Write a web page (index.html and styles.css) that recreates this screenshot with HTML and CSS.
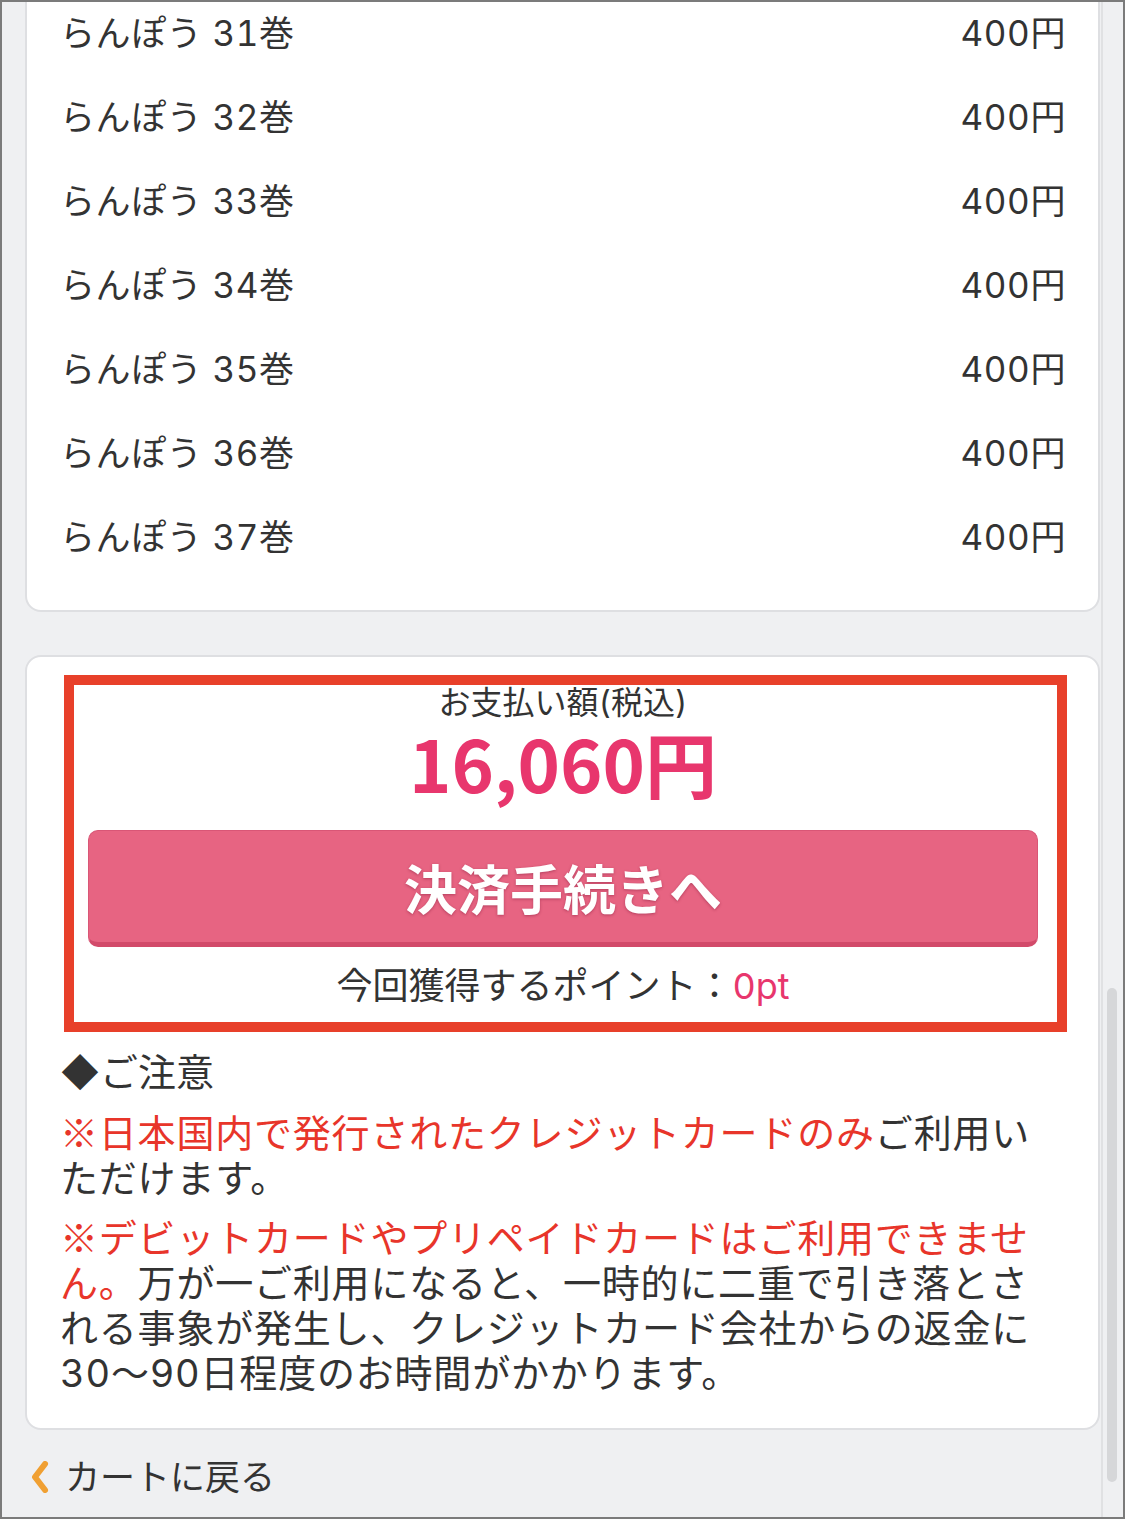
FILE: index.html
```html
<!DOCTYPE html>
<html lang="ja">
<head>
<meta charset="utf-8">
<title>お支払い</title>
<link rel="stylesheet" href="styles.css">
</head>
<body>
<div class="frame">
  <div class="page">
    <div class="card card-list">
      <div class="row"><span>らんぽう 31巻</span><span>400円</span></div>
      <div class="row"><span>らんぽう 32巻</span><span>400円</span></div>
      <div class="row"><span>らんぽう 33巻</span><span>400円</span></div>
      <div class="row"><span>らんぽう 34巻</span><span>400円</span></div>
      <div class="row"><span>らんぽう 35巻</span><span>400円</span></div>
      <div class="row"><span>らんぽう 36巻</span><span>400円</span></div>
      <div class="row"><span>らんぽう 37巻</span><span>400円</span></div>
    </div>

    <div class="card card-pay">
      <div class="pay-label">お支払い額(税込)</div>
      <div class="pay-amount">16,060円</div>
      <div class="pay-button">決済手続きへ</div>
      <div class="points">今回獲得するポイント：<span class="pink">0pt</span></div>
      <div class="highlight"></div>

      <div class="notice-title">◆ご注意</div>
      <p class="note"><span class="red cjk">※</span><span class="red">日本国内で発行されたクレジットカードのみ</span>ご利用いただけます。</p>
      <p class="note"><span class="red cjk">※</span><span class="red">デビットカードやプリペイドカードはご利用できません。</span>万が一ご利用になると、一時的に二重で引き落とされる事象が発生し、クレジットカード会社からの返金に30〜90日程度のお時間がかかります。</p>
    </div>

    <div class="back">
      <svg class="chev" width="20" height="32" viewBox="0 0 20 32"><polyline points="15,3 5,16 15,29" fill="none" stroke="#f0a033" stroke-width="6" stroke-linecap="round" stroke-linejoin="round"/></svg>
      <span>カートに戻る</span>
    </div>
  </div>

  <div class="scroll-track"><div class="scroll-thumb"></div></div>
</div>
</body>
</html>
```

FILE: styles.css
```css
html, body {
  margin: 0;
  padding: 0;
}
body {
  font-family: Inter, "Noto Sans CJK JP", sans-serif;
  font-variant-numeric: tabular-nums;
  color: #333;
}
.cjk {
  font-family: "Noto Sans CJK JP", sans-serif;
  line-height: 0;
}
.frame {
  width: 1125px;
  height: 1519px;
  box-sizing: border-box;
  border: 2px solid #7b7b7b;
  background: #eff0f2;
  position: relative;
  overflow: hidden;
}
.page {
  padding: 0 23px;
}
.card {
  background: #fff;
  border: 2px solid #dedfe2;
  border-radius: 16px;
  position: relative;
}
.card-list {
  margin-top: -43px;
  padding: 30px 32px 31px 33px;
}
.row {
  height: 84px;
  display: flex;
  align-items: center;
  justify-content: space-between;
  font-size: 35px;
  line-height: 1;
  letter-spacing: 0.6px;
}
.card-pay {
  margin-top: 43px;
  padding: 25px 32px 32px 33px;
}
.pay-label {
  text-align: center;
  font-size: 32px;
  line-height: 41px;
}
.pay-amount {
  text-align: center;
  font-family: "Noto Sans CJK JP", sans-serif;
  font-size: 72px;
  line-height: 78px;
  padding-bottom: 10px;
  font-weight: 700;
  color: #e8366d;
}
.pay-button {
  margin: 19px 28px 0;
  height: 111px;
  border: 1px solid #d95676;
  border-bottom: 5px solid #d24a6a;
  border-radius: 10px;
  background: #e76482;
  color: #fff;
  font-family: "Noto Sans CJK JP", sans-serif;
  font-size: 53px;
  font-weight: 700;
  display: flex;
  align-items: center;
  justify-content: center;
  text-shadow: 0 1px 3px rgba(120, 20, 50, 0.45);
}
.points {
  margin-top: 14px;
  text-align: center;
  font-size: 36px;
  line-height: 50px;
}
.pink {
  color: #e8366d;
}
.highlight {
  position: absolute;
  left: 37px;
  top: 18px;
  width: 1003px;
  height: 357px;
  box-sizing: border-box;
  border: 10px solid #e8402a;
}
.notice-title {
  margin-top: 36px;
  font-size: 38px;
  line-height: 50px;
}
.note {
  margin: 14px 0 0;
  font-size: 38px;
  letter-spacing: 0.8px;
  line-height: 45px;
}
.note + .note {
  margin-top: 15px;
}
.red {
  color: #e8352a;
}
.back {
  margin-top: 22px;
  padding-left: 5px;
  display: flex;
  align-items: center;
  gap: 15px;
  font-size: 35px;
  line-height: 50px;
}
.scroll-track {
  position: absolute;
  top: 0;
  bottom: 0;
  left: 1099px;
  width: 22px;
  border-left: 2px solid #e0e1e3;
}
.scroll-thumb {
  position: absolute;
  left: 4px;
  width: 10px;
  top: 986px;
  height: 494px;
  border-radius: 5px;
  background: #d6d7d9;
}
```
